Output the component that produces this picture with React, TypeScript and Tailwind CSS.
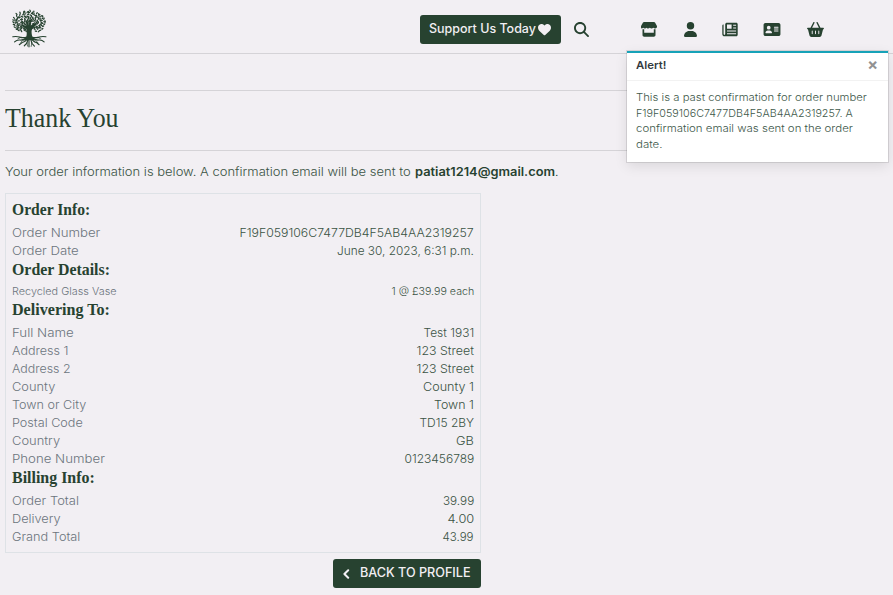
import { useLayoutEffect, useRef, useState } from 'react';
import type { ReactNode } from 'react';
import {
  FaUser,
  FaAddressCard,
  FaBasketShopping,
  FaMagnifyingGlass,
  FaHeart,
} from 'react-icons/fa6';

/* Text run stretched horizontally so that it occupies a given width. */
function Fit({ w, className = '', right = false, children }: { w: number; className?: string; right?: boolean; children: ReactNode }) {
  const ref = useRef<HTMLSpanElement>(null);
  const [scale, setScale] = useState(1);
  useLayoutEffect(() => {
    const measure = () => {
      if (ref.current && ref.current.offsetWidth) setScale(w / ref.current.offsetWidth);
    };
    measure();
    document.fonts.ready.then(measure);
  }, [w]);
  return (
    <span className={`flex whitespace-nowrap ${right ? 'justify-end' : ''} ${className}`} style={{ width: w }}>
      <span
        ref={ref}
        className={`inline-block shrink-0 ${right ? 'origin-right' : 'origin-left'}`}
        style={{ transform: `scaleX(${scale})` }}
      >
        {children}
      </span>
    </span>
  );
}

const leaves = Array.from({ length: 150 }, (_, i) => {
  const r = Math.sqrt((i + 0.5) / 150);
  const a = i * 2.39996;
  const jx = ((i * 37) % 11) / 2.5 - 2;
  const jy = ((i * 53) % 13) / 3 - 2;
  return { x: 50 + Math.cos(a) * r * 46 + jx, y: 36 + Math.sin(a) * r * 32 + jy, t: (i * 67) % 180 };
}).filter((l) => !(Math.abs(l.x - 50) < 7 && l.y > 40) && !(l.y > 61 && Math.abs(l.x - 50) < 24));

function TreeLogo() {
  return (
    <svg viewBox="0 0 100 106" className="ml-px h-[39px] w-[36px]" fill="#274230" stroke="#274230" strokeLinecap="round">
      <path
        stroke="none"
        d="M42 78 Q46 62 42 53 L29 46 L31 42 L43 46 L41 32 L45 31 L49 44 L53 29 L57 30 L55 45 L68 39 L70 43 L59 53 Q55 64 60 78 L68 86 L50 85 L32 87 Z"
      />
      <g fill="none" strokeWidth="2">
        <path d="M44 53 L26 50 L13 54 M30 50 L20 40 M44 46 L32 33 M43 35 L38 24 M49 43 L50 18 M54 35 L60 22 M56 45 L70 32 M56 52 L74 49 L88 53 M71 49 L80 42" />
        <path
          strokeWidth="3.200"
          d="M45 77 Q32 80 24 77 T5 76 M45 79 Q34 86 25 85 T10 90 M47 80 Q39 91 31 92 L23 98 M48 80 L44 94 L37 101 M50 80 L50 104 M54 80 L58 94 L65 102 M55 79 Q63 91 71 92 L78 98 M57 78 Q68 86 77 85 T92 90 M57 77 Q70 80 78 77 T97 76"
        />
        <path d="M28 77 L19 82 M33 84 L27 93 M44 92 L46 102 M58 92 L56 103 M67 84 L75 93 M73 77 L83 82" />
      </g>
      {leaves.map((l, i) => (
        <ellipse key={i} cx={l.x} cy={l.y} rx="3.7" ry="1.9" stroke="none" transform={`rotate(${l.t} ${l.x} ${l.y})`} />
      ))}
    </svg>
  );
}

/* Shop front: scalloped awning over a box with a window. */
function StoreIcon() {
  return (
    <svg viewBox="0 0 16 15" className="ml-[52px] h-[15px] w-4" fill="currentColor">
      <path d="M3 0h10c.4 0 .8.2 1 .5l1.7 2.9c.8 1.4 0 3-1.5 3.1-.8 0-1.4-.3-1.9-.8-.9 1-2.6 1-3.5 0-.5.5-1 .8-1.8.8s-.9-.3-1.3-.8c-.9 1-2.6 1-3.5 0-.4.5-1 .8-1.7.8C.2 6.400-.5 4.800.3 3.400L2 .5C2.200.2 2.600 0 3 0z" />
      <path d="M1.500 7.200h1.700v3.600h9.600V7.200h1.700v5.900c0 1-.7 1.700-1.700 1.700H3.200c-1 0-1.700-.7-1.700-1.700z" />
    </svg>
  );
}

function NewspaperIcon() {
  return (
    <svg viewBox="0 0 16 15" className="ml-[25px] h-[15px] w-4" fill="currentColor" fillRule="evenodd">
      <path d="M5 .7h9.200c.9 0 1.500.6 1.500 1.500v10.600c0 .9-.6 1.500-1.500 1.500H2.500C1.200 14.300.3 13.400.3 12.200V3.700c0-.9.5-1.300 1.300-1.300v9.700c0 .5.3.8.8.8s.8-.3.8-.8V2.200C3.200 1.300 4 .7 5 .7zM5 2.600v4.100h4.600V2.600zM11.200 2.700v1h2.900v-1zM11.200 5.600v1h2.900v-1zM5 8.400v1.100h9.100V8.400zM5 11.200v1.100h9.100v-1.100z" />
    </svg>
  );
}

type Line = [string, number, string, number];
type Section = { title: string; w: number; small?: boolean; rows: Line[] };

const sections: Section[] = [
  {
    title: 'Order Info:',
    w: 78,
    rows: [
      ['Order Number', 88.5, 'F19F059106C7477DB4F5AB4AA2319257', 234.5],
      ['Order Date', 66.5, 'June 30, 2023, 6:31 p.m.', 137],
    ],
  },
  { title: 'Order Details:', w: 98, small: true, rows: [['Recycled Glass Vase', 104.5, '1 @ £39.99 each', 82.5]] },
  {
    title: 'Delivering To:',
    w: 97.5,
    rows: [
      ['Full Name', 61.5, 'Test 1931', 50.5],
      ['Address 1', 56, '123 Street', 57.5],
      ['Address 2', 58.5, '123 Street', 57.5],
      ['County', 43.5, 'County 1', 51],
      ['Town or City', 74, 'Town 1', 40],
      ['Postal Code', 71, 'TD15 2BY', 54.5],
      ['Country', 48, 'GB', 18],
      ['Phone Number', 93, '0123456789', 69.5],
    ],
  },
  {
    title: 'Billing Info:',
    w: 82.5,
    rows: [
      ['Order Total', 66.5, '39.99', 31],
      ['Delivery', 48.5, '4.00', 26.5],
      ['Grand Total', 68.5, '43.99', 31.5],
    ],
  },
];

function OrderSummary() {
  return (
    <section className="h-[360px] w-[476px] border border-[#dee2e6] px-1.5 pt-1.5">
      {sections.map((s) => (
        <div key={s.title}>
          <h2 className="h-6 font-['Liberation_Serif',serif] text-[17px] leading-[19px] font-bold">
            <Fit w={s.w}>{s.title}</Fit>
          </h2>
          {s.rows.map(([label, lw, value, vw]) => (
            <div
              key={label}
              className={`flex justify-between ${s.small ? 'h-4 text-[10.6px] leading-4' : 'h-[18px] text-[12.1px] leading-[18px]'}`}
            >
              <Fit w={lw} className="text-[#6c757d]">{label}</Fit>
              <Fit w={vw} right className="text-[#3a5344]">{value}</Fit>
            </div>
          ))}
        </div>
      ))}
    </section>
  );
}

function Toast() {
  return (
    <aside className="absolute top-[51px] left-[627px] h-[111px] w-[261px] border-t-2 border-[#17a2b8] bg-white shadow-[0_0_0_1px_rgba(0,0,0,0.1),0_4px_12px_rgba(0,0,0,0.1)]">
      <div className="flex h-7 items-center justify-between border-b border-black/5 pr-[10px] pl-[9px]">
        <strong className="pb-[3px] text-[11px] leading-4 font-semibold text-[#343a40]">
          <Fit w={30}>Alert!</Fit>
        </strong>
        <span className="pb-[5px] text-[16px] leading-4 font-bold text-[#929292]">×</span>
      </div>
      <div className="flex flex-col px-[9px] pt-[9px] text-[10.6px] leading-[15.7px] text-[#40584a]">
        <Fit w={231}>This is a past confirmation for order number</Fit>
        <Fit w={217}>F19F059106C7477DB4F5AB4AA2319257. A</Fit>
        <Fit w={217}>confirmation email was sent on the order</Fit>
        <Fit w={26}>date.</Fit>
      </div>
    </aside>
  );
}

export default function App() {
  return (
    <div className="relative h-[595px] w-[893px] overflow-hidden bg-[#f2eff3] font-['Inter','Liberation_Sans',sans-serif] font-light text-[#274230]">
      <header className="flex h-[54px] items-start border-b border-[#d5d3d7] pl-[10px]">
        <div className="w-[410px] pt-[9px]">
          <TreeLogo />
        </div>
        <button className="mt-[15px] flex h-[29px] w-[141px] items-center rounded-[3px] bg-[#274230] pl-[9px] text-[12.6px] font-medium text-[#f2eff3]">
          <Fit w={107}>Support Us Today</Fit>
          <FaHeart className="mb-px ml-[2px] size-[13px]" />
        </button>
        <FaMagnifyingGlass className="mt-[22px] ml-[13px] size-[15px]" />
        <nav className="flex pt-[22px]">
          <StoreIcon />
          <FaUser className="ml-[27px] h-[15px] w-[13px]" />
          <NewspaperIcon />
          <FaAddressCard className="ml-[25px] h-[15px] w-[18px]" />
          <FaBasketShopping className="ml-[26px] h-[15px] w-[17px]" />
        </nav>
      </header>
      <main className="px-[5px] pt-9">
        <div className="flex h-[61px] items-start border-y border-[#d5d3d7] pt-[11px]">
          <h1 className="font-['Liberation_Serif',serif] text-[27px] leading-8 font-normal">
            <Fit w={114}>Thank You</Fit>
          </h1>
        </div>
        <p className="flex h-[42px] pt-[12px] text-[12.1px] leading-[18px]">
          <Fit w={406} className="text-[#3a5344]">Your order information is below. A confirmation email will be sent to</Fit>
          <Fit w={140} className="ml-1 font-semibold">patiat1214@gmail.com</Fit>
          <span>.</span>
        </p>
        <OrderSummary />
        <div className="flex w-[476px] justify-end pt-1.5">
          <button className="flex h-[29px] w-[148px] items-center rounded-[3px] bg-[#274230] pl-[9px] text-[12.4px] font-medium text-[#f2eff3]">
            <svg viewBox="0 0 9 10" className="mr-[9px] h-[10px] w-[9px]" fill="none" stroke="currentColor" strokeWidth="2" strokeLinecap="round" strokeLinejoin="round">
              <path d="M6.200 1.200 2.400 5l3.800 3.800" />
            </svg>
            <Fit w={111}>BACK TO PROFILE</Fit>
          </button>
        </div>
      </main>
      <Toast />
    </div>
  );
}
